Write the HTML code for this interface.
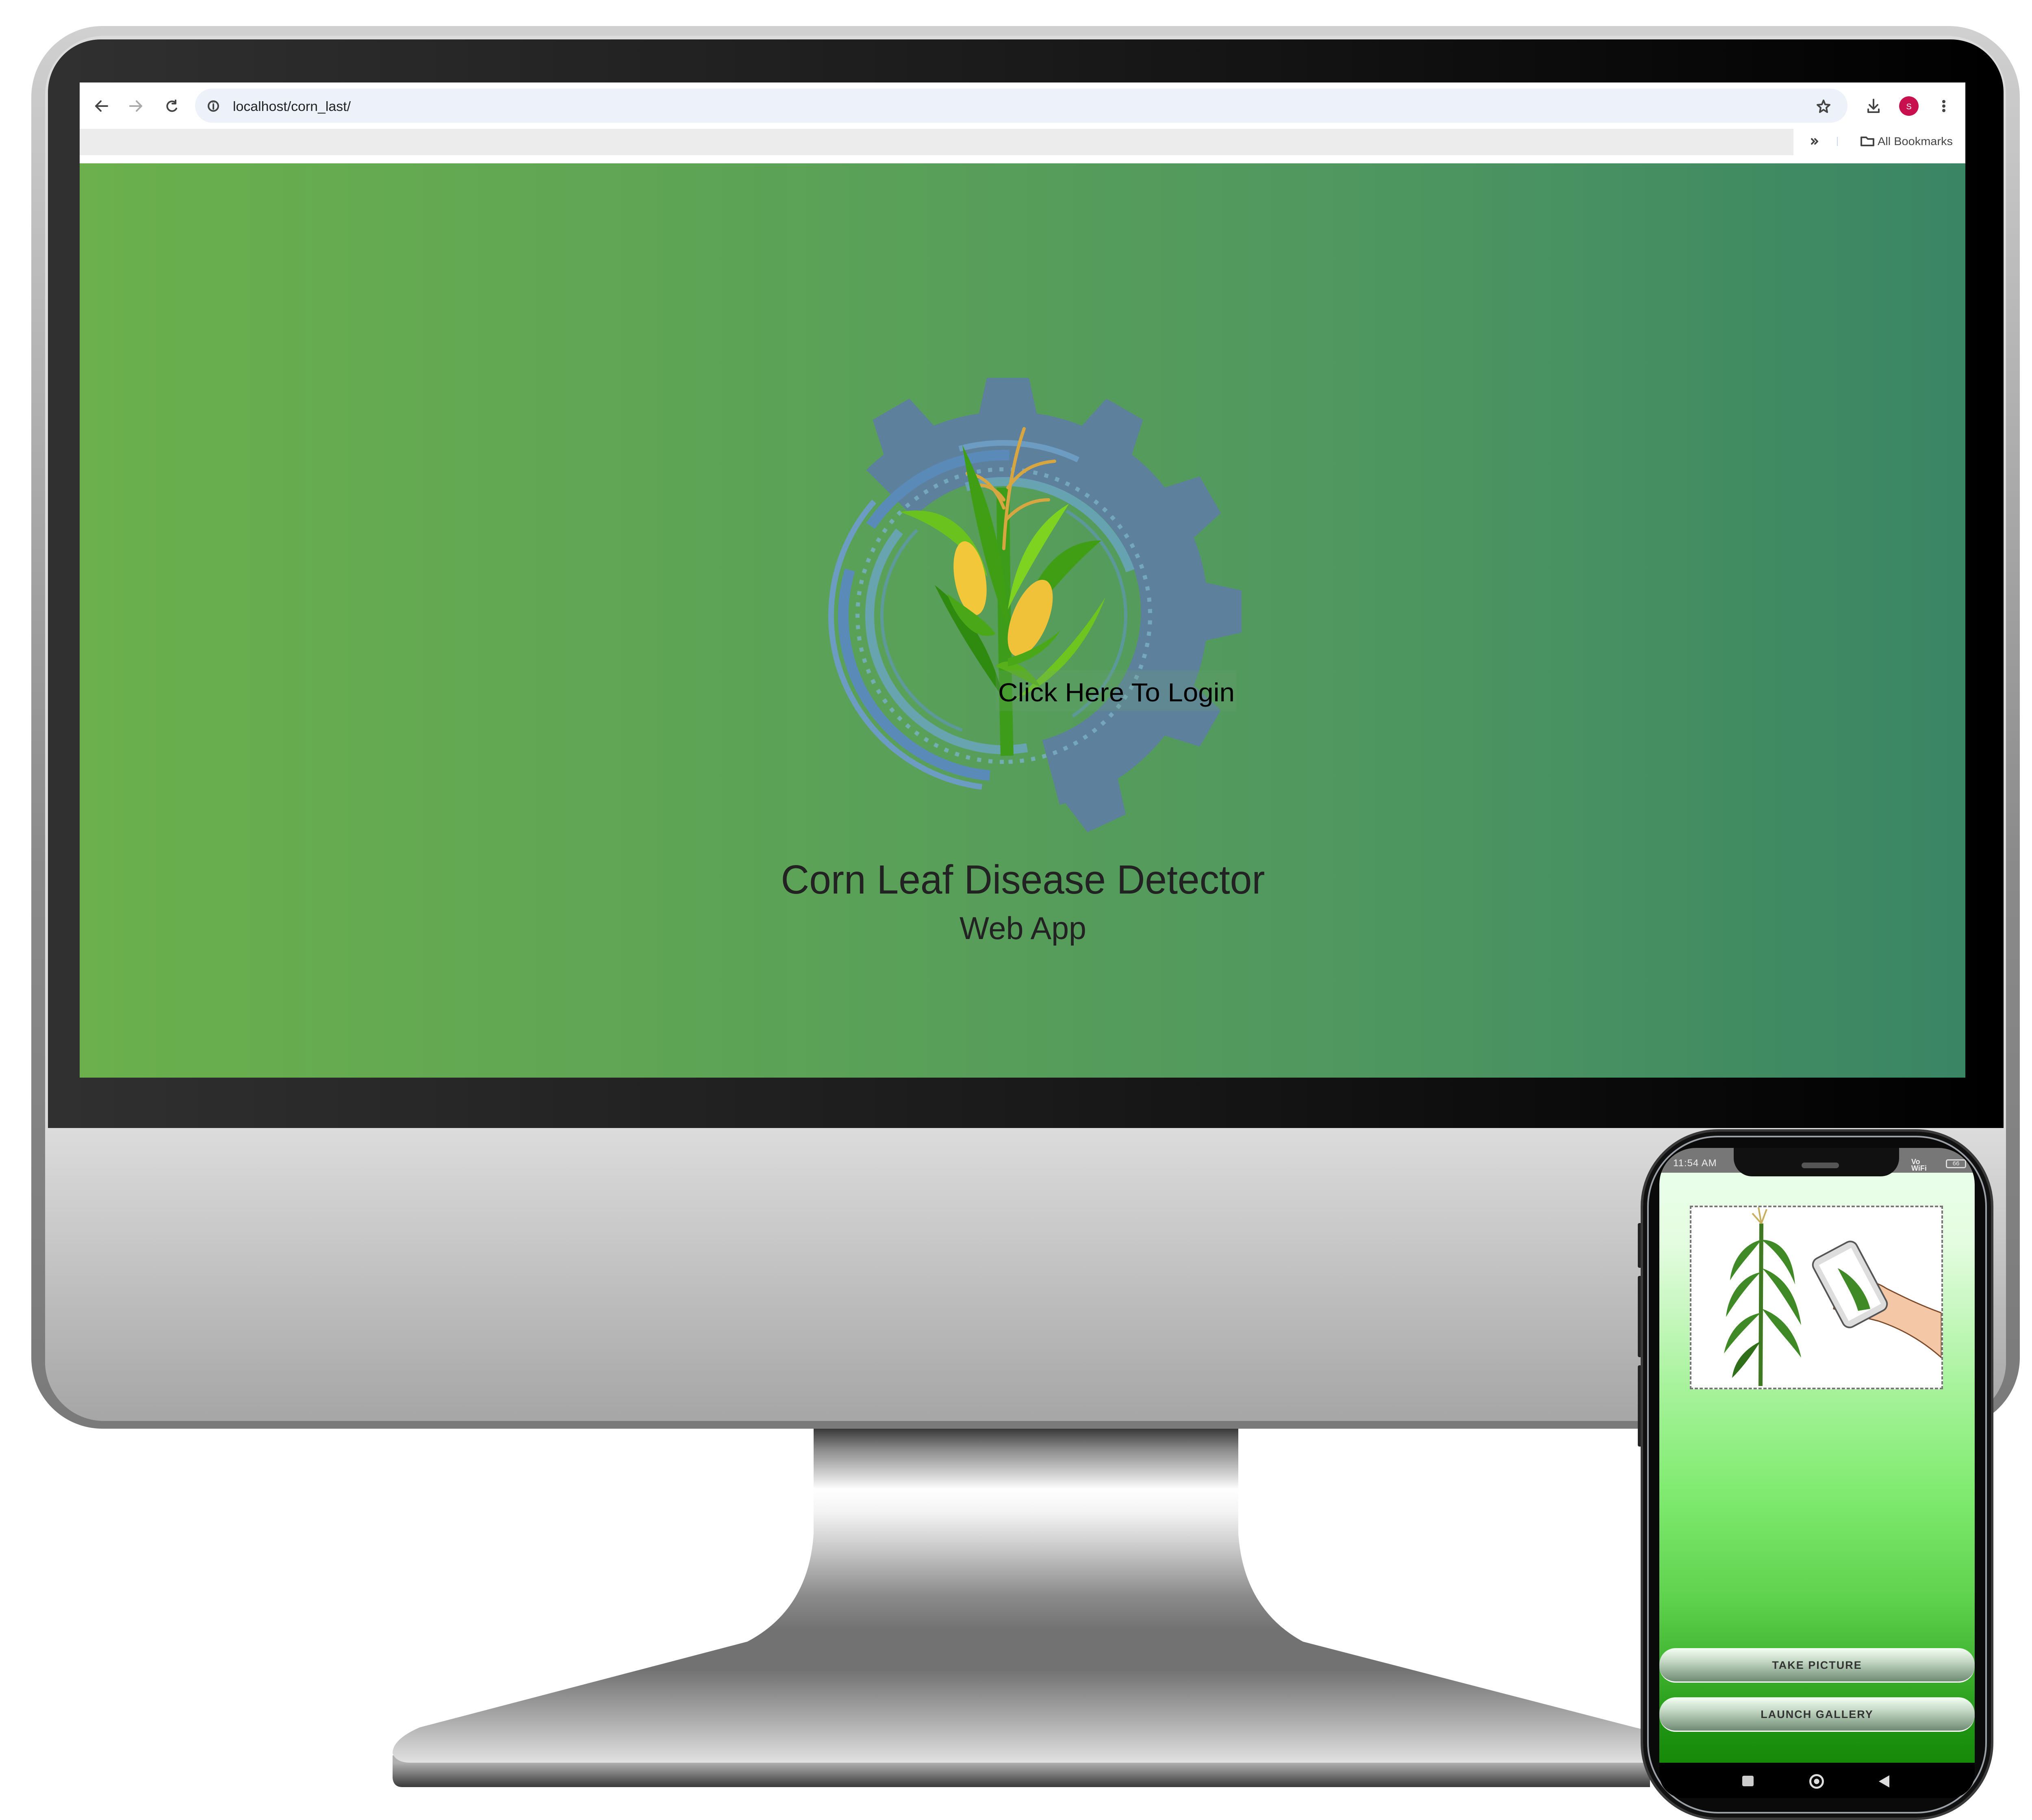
<!DOCTYPE html>
<html><head><meta charset="utf-8"><style>
*{margin:0;padding:0;box-sizing:border-box}
body{width:5047px;height:4467px;background:#fff;position:relative;overflow:hidden;font-family:"Liberation Sans",sans-serif}
.abs{position:absolute}
</style></head><body>

<!-- stand -->
<svg class="abs" style="left:0;top:0" width="5047" height="4467" viewBox="0 0 5047 4467">
<defs>
<linearGradient id="st" x1="0" y1="3517" x2="0" y2="4340" gradientUnits="userSpaceOnUse">
<stop offset="0" stop-color="#3a3a3a"/><stop offset="0.06" stop-color="#8a8a8a"/><stop offset="0.15" stop-color="#e0e0e0"/><stop offset="0.18" stop-color="#fff"/><stop offset="0.25" stop-color="#f3f3f3"/><stop offset="0.36" stop-color="#c8c8c8"/><stop offset="0.5" stop-color="#8a8a8a"/><stop offset="0.6" stop-color="#727272"/><stop offset="0.72" stop-color="#727272"/><stop offset="0.85" stop-color="#a4a4a4"/><stop offset="1" stop-color="#e2e2e2"/>
</linearGradient>
<linearGradient id="sb" x1="0" y1="4338" x2="0" y2="4398" gradientUnits="userSpaceOnUse">
<stop offset="0" stop-color="#b0b0b0"/><stop offset="1" stop-color="#3a3a3a"/></linearGradient>
</defs>
<path d="M966 4320 L966 4375 Q968 4398 990 4398 L4060 4398 L4060 4320 Z" fill="url(#sb)"/>
<path d="M2002 3510 L2002 3774 Q1990 3960 1839 4040 L1033 4251 Q966 4280 966 4315 Q975 4338 1010 4338 L4060 4338 L4060 4260 L4022 4251 L3206 4040 Q3060 3960 3047 3774 L3047 3510 Z" fill="url(#st)"/>
</svg>

<!-- monitor frame -->
<div class="abs" style="left:77px;top:64px;width:4893px;height:3452px;border-radius:175px;background:linear-gradient(#d0d0d0,#8a8a8a 60%,#7a7a7a)"></div>
<div class="abs" style="left:111px;top:88px;width:4825px;height:3409px;border-radius:145px;background:linear-gradient(#dcdcdc 78%,#a6a6a6);overflow:hidden">
  <div class="abs" style="left:7px;top:9px;width:4812px;height:2679px;border-radius:130px 130px 0 0;background:linear-gradient(90deg,#303030,#1a1a1a 50%,#000)"></div>
  <div class="abs" style="left:0;top:2688px;width:4825px;height:721px;background:linear-gradient(#dcdcdc,#a6a6a6)"></div>
</div>

<!-- browser -->
<div class="abs" style="left:196px;top:203px;width:4640px;height:199px;background:#fff"></div>
<div class="abs" style="left:480px;top:218px;width:4066px;height:84px;border-radius:42px;background:#edf1f9"></div>
<div class="abs" style="left:196px;top:317px;width:4217px;height:65px;background:#ececec"></div>
<svg class="abs" style="left:196px;top:203px" width="4640" height="199" viewBox="0 0 4640 199">
<g fill="none" stroke="#444" stroke-width="4" stroke-linecap="round" stroke-linejoin="round">
<path d="M40 58 H68 M40 58 L52 46 M40 58 L52 70"/>
<path d="M152 58 H124 M152 58 L140 46 M152 58 L140 70" stroke="#aaa"/>
<path d="M236 50 A12 12 0 1 0 238 64 M236 44 V52 H228"/>
<circle cx="329" cy="58" r="12"/><path d="M329 54 V65" /><circle cx="329" cy="49" r="0.5"/>
<path d="M4291 44 L4295 54 L4306 55 L4298 62 L4300 73 L4291 67 L4282 73 L4284 62 L4276 55 L4287 54 Z"/>
<path d="M4414 42 V64 M4404 55 L4414 65 L4424 55 M4401 66 V73 H4427 V66"/>
<path d="M4262 139 L4268 145 L4262 151 M4270 139 L4276 145 L4270 151"/>
<path d="M4384 135 H4396 L4400 139 H4414 V155 H4384 Z"/>
</g>
<line x1="4325" y1="134" x2="4325" y2="156" stroke="#c8d6f0" stroke-width="2"/>
<circle cx="4501" cy="58" r="24" fill="#c8104e"/>
<text x="4501" y="66" font-size="20" fill="#fff" text-anchor="middle" font-family="Liberation Sans">S</text>
<circle cx="4587" cy="47" r="4" fill="#444"/><circle cx="4587" cy="58" r="4" fill="#444"/><circle cx="4587" cy="69" r="4" fill="#444"/>
<text x="377" y="70" font-size="33" fill="#222" font-family="Liberation Sans" textLength="290" lengthAdjust="spacingAndGlyphs">localhost/corn_last/</text>
<text x="4424" y="154" font-size="28" fill="#444" font-family="Liberation Sans" textLength="185" lengthAdjust="spacingAndGlyphs">All Bookmarks</text>
</svg>

<!-- page content -->
<div class="abs" style="left:196px;top:402px;width:4640px;height:2250px;background:linear-gradient(90deg,#6bb04c,#5da356 35%,#4e9660 70%,#3a8564)"></div>

<svg class="abs" style="left:0;top:0" width="5047" height="2700" viewBox="0 0 5047 2700">
<g fill="#5d809d">
<path d="M2190 1215 A410 410 0 1 1 2586 1901" fill="none" stroke="#5d809d" stroke-width="165"/>
<g id="t"><polygon points="2428,930 2532,930 2556,1040 2404,1040"/></g>
<polygon points="2428,930 2532,930 2556,1040 2404,1040" transform="rotate(-30 2480 1505)"/>
<polygon points="2428,930 2532,930 2556,1040 2404,1040" transform="rotate(30 2480 1505)"/>
<polygon points="2428,930 2532,930 2556,1040 2404,1040" transform="rotate(60 2480 1505)"/>
<polygon points="2428,930 2532,930 2556,1040 2404,1040" transform="rotate(90 2480 1505)"/>
<polygon points="2428,930 2532,930 2556,1040 2404,1040" transform="rotate(120 2480 1505)"/>
<polygon points="2428,930 2532,930 2556,1040 2404,1040" transform="rotate(155 2480 1505)"/>
</g>
<g fill="none" stroke-linecap="butt">
<circle cx="2470" cy="1515" r="425" stroke="#6c9cc2" stroke-width="14" stroke-dasharray="900 250 300 1200" transform="rotate(100 2470 1515)"/>
<circle cx="2470" cy="1515" r="395" stroke="#5a8ab8" stroke-width="26" stroke-dasharray="700 120 400 1300" transform="rotate(95 2470 1515)"/>
<circle cx="2470" cy="1515" r="360" stroke="#7ab0c8" stroke-width="10" stroke-dasharray="10 18" transform="rotate(90 2470 1515)" opacity="0.8"/>
<circle cx="2470" cy="1515" r="330" stroke="#6aa5c0" stroke-width="22" stroke-dasharray="800 200 500 800" transform="rotate(80 2470 1515)" opacity="0.85"/>
<circle cx="2470" cy="1515" r="300" stroke="#5f97b5" stroke-width="8" stroke-dasharray="600 400" transform="rotate(110 2470 1515)" opacity="0.7"/>
</g>
<!-- corn -->
<path d="M2478 1860 C2474 1700 2470 1500 2468 1200" stroke="#3d9c1a" stroke-width="32" fill="none"/>
<g fill="none" stroke="#d8a640" stroke-width="8" stroke-linecap="round">
<path d="M2470 1350 C2475 1250 2490 1140 2520 1055"/>
<path d="M2470 1250 C2450 1200 2420 1170 2380 1165"/>
<path d="M2480 1200 C2510 1160 2540 1140 2595 1135"/>
<path d="M2475 1280 C2510 1240 2550 1230 2580 1230"/>
<path d="M2470 1230 C2450 1200 2420 1190 2395 1195"/>
</g>
<g fill="#3f9e14">
<path d="M2368 1095 C2420 1200 2470 1330 2480 1540 C2440 1450 2400 1300 2368 1095 Z"/>
<path d="M2215 1260 C2320 1240 2400 1300 2430 1420 C2370 1340 2300 1290 2215 1260 Z" fill="#69c21e"/>
<path d="M2630 1240 C2560 1280 2500 1360 2480 1500 C2530 1400 2580 1320 2630 1240 Z" fill="#7ed321"/>
<path d="M2710 1330 C2600 1330 2540 1420 2500 1560 C2580 1460 2640 1390 2710 1330 Z"/>
<path d="M2720 1470 C2650 1580 2580 1650 2500 1720 C2590 1680 2670 1600 2720 1470 Z" fill="#6fc51f"/>
<path d="M2300 1440 C2380 1500 2440 1600 2470 1720 C2400 1620 2350 1540 2300 1440 Z" fill="#2f8a10"/>
<path d="M2560 1690 C2530 1640 2480 1610 2450 1640 C2500 1660 2530 1680 2560 1690Z" fill="#58b01a"/>
</g>
<ellipse cx="2387" cy="1423" rx="38" ry="92" fill="#f2c73a" transform="rotate(-10 2387 1423)"/>
<ellipse cx="2535" cy="1521" rx="44" ry="100" fill="#f0c23a" transform="rotate(22 2535 1521)"/>
<path d="M2330 1460 C2360 1540 2410 1580 2450 1560 C2420 1520 2380 1500 2330 1460Z" fill="#4aa818"/>
<path d="M2480 1620 C2520 1610 2580 1580 2610 1550 C2580 1600 2530 1630 2480 1640Z" fill="#4aa818"/>
<rect x="2450" y="1650" width="592" height="100" fill="#6a9e72" opacity="0.25"/>
<text x="2456" y="1726" font-size="64" fill="#000" font-family="Liberation Sans" textLength="582" lengthAdjust="spacingAndGlyphs">Click Here To Login</text>
<text x="2517" y="2199" font-size="100" fill="#222" font-family="Liberation Sans" text-anchor="middle" textLength="1191" lengthAdjust="spacingAndGlyphs">Corn Leaf Disease Detector</text>
<text x="2517" y="2311" font-size="78" fill="#222" font-family="Liberation Sans" text-anchor="middle" textLength="312" lengthAdjust="spacingAndGlyphs">Web App</text>
</svg>

<!-- phone -->
<div class="abs" style="left:4030px;top:3010px;width:14px;height:110px;background:#222;border-radius:4px"></div>
<div class="abs" style="left:4030px;top:3140px;width:14px;height:200px;background:#222;border-radius:4px"></div>
<div class="abs" style="left:4030px;top:3360px;width:14px;height:200px;background:#222;border-radius:4px"></div>
<div class="abs" style="left:4037px;top:2779px;width:868px;height:1700px;border-radius:190px;background:#0a0a0a;border:6px solid #3a3a3a;box-shadow:inset 0 0 0 10px #111,inset 0 0 0 14px #9aa0a6,inset 0 0 0 22px #0a0a0a"></div>
<div class="abs" style="left:4083px;top:2825px;width:776px;height:1600px;border-radius:90px 90px 60px 60px;overflow:hidden;background:#000">
  <div class="abs" style="left:0;top:0;width:776px;height:61px;background:#777"></div>
  <div class="abs" style="left:0;top:61px;width:776px;height:1452px;background:linear-gradient(#eaffea 0%,#e4fce0 12%,#a6f29a 37%,#82ec72 53%,#5fd24e 72%,#3cb02c 85%,#1e9412 94%,#168a08 100%)"></div>
  <div class="abs" style="left:183px;top:0;width:407px;height:70px;border-radius:0 0 45px 45px;background:#111"></div>
  <div class="abs" style="left:350px;top:36px;width:92px;height:14px;border-radius:7px;background:#555"></div>
  <div class="abs" style="left:34px;top:24px;font-size:24px;color:#eee;letter-spacing:1px">11:54 AM</div>
  <div class="abs" style="left:620px;top:26px;font-size:18px;color:#eee;line-height:16px;font-weight:bold">Vo<br>WiFi</div>
  <div class="abs" style="left:705px;top:28px;width:50px;height:22px;border:3px solid #ddd;border-radius:5px;font-size:15px;color:#eee;text-align:center;line-height:16px">66</div>
  <!-- image box -->
  <div class="abs" style="left:75px;top:142px;width:623px;height:452px;background:#fff;border:4px dashed #777">
    <svg width="615" height="444" viewBox="0 0 615 444">
      <path d="M170 440 L172 40" stroke="#3f7a22" stroke-width="10"/>
      <g fill="#3f8a26">
        <path d="M172 80 C130 90 100 130 95 180 C120 140 150 110 172 80Z"/>
        <path d="M172 80 C220 80 250 120 255 190 C235 140 205 105 172 80Z"/>
        <path d="M170 160 C120 170 90 220 85 270 C110 230 140 190 170 160Z"/>
        <path d="M174 150 C230 170 260 220 270 290 C240 240 210 190 174 150Z"/>
        <path d="M170 260 C120 270 90 310 80 360 C110 320 140 290 170 260Z"/>
        <path d="M174 250 C230 270 260 320 270 370 C240 330 210 300 174 250Z"/>
        <path d="M170 330 C130 350 105 380 100 420 C130 390 150 360 170 330Z" fill="#2f6f1a"/>
      </g>
      <path d="M172 40 L165 0 M172 40 L185 5 M172 40 L150 15" stroke="#c9b060" stroke-width="4"/>
      <path d="M350 250 C380 260 420 270 460 280 C520 300 570 330 615 370 L615 260 C560 240 520 220 480 200 C450 180 400 170 360 180Z" fill="#f4c8a6" stroke="#7a4a2a" stroke-width="3"/>
      <rect x="330" y="95" width="120" height="190" rx="18" fill="#ddd" stroke="#555" stroke-width="4" transform="rotate(-28 390 190)"/>
      <rect x="345" y="112" width="90" height="156" fill="#fff" transform="rotate(-28 390 190)"/>
      <path d="M360 150 C400 170 430 210 440 250 L410 255 C400 220 380 190 360 150Z" fill="#3f8a26"/>
    </svg>
  </div>
  <!-- buttons -->
  <div class="abs" style="left:0;top:1231px;width:776px;height:85px;border-radius:40px;background:linear-gradient(#f4fff4,#c4d8c4 40%,#6e8b74);border-bottom:3px solid #fff;font-weight:bold;font-size:27px;color:#333;text-align:center;line-height:85px;letter-spacing:2px">TAKE PICTURE</div>
  <div class="abs" style="left:0;top:1352px;width:776px;height:85px;border-radius:40px;background:linear-gradient(#f4fff4,#c4d8c4 40%,#6e8b74);border-bottom:3px solid #fff;font-weight:bold;font-size:27px;color:#333;text-align:center;line-height:85px;letter-spacing:2px">LAUNCH GALLERY</div>
  <!-- nav -->
  <div class="abs" style="left:204px;top:1545px;width:28px;height:26px;border-radius:4px;background:#ccc"></div>
  <div class="abs" style="left:369px;top:1541px;width:36px;height:36px;border-radius:50%;border:5px solid #ddd"></div>
  <div class="abs" style="left:375px;top:1547px;width:24px;height:24px;border-radius:50%;background:#ddd;transform:scale(.55)"></div>
  <div class="abs" style="left:540px;top:1544px;width:0;height:0;border-top:15px solid transparent;border-bottom:15px solid transparent;border-right:26px solid #ddd"></div>
</div>
</body></html>
